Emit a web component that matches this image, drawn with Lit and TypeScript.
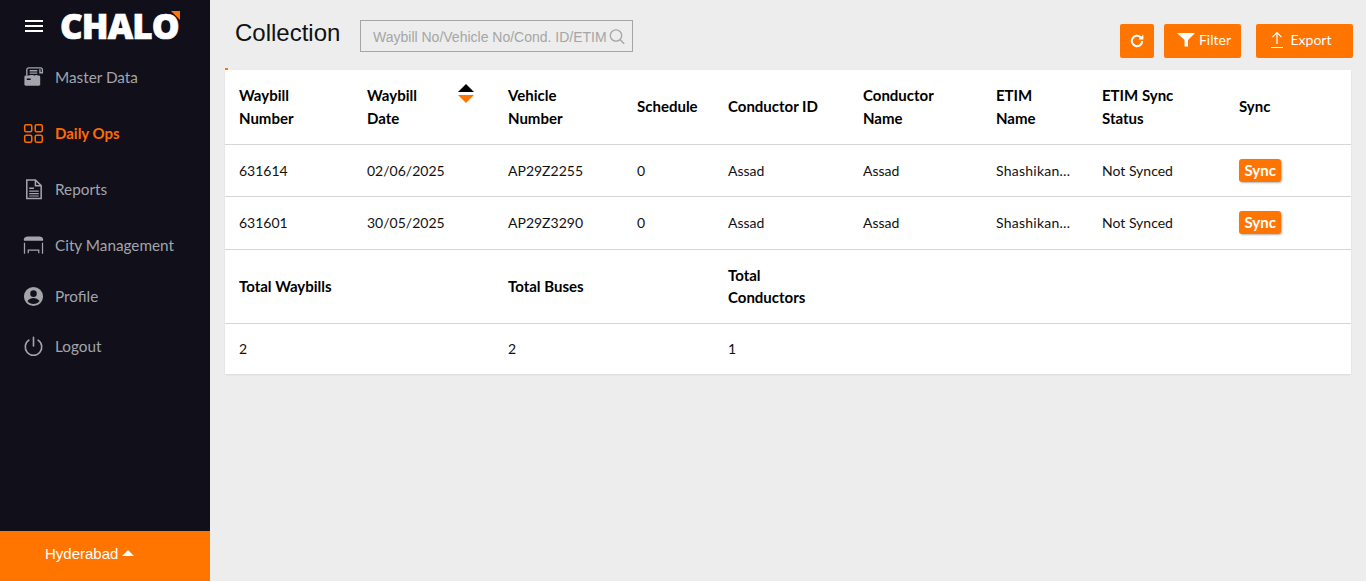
import { LitElement, html, css, svg } from 'lit';
import { customElement } from 'lit/decorators.js';

const navIcons: Record<string, unknown> = {
    master: svg`<path fill="none" stroke="currentColor" stroke-width="1.4" d="M5 10V3.5A2 2 0 0 1 7 2h12.5a1.8 1.8 0 0 1 1.8 1.8V7h-2.6V3.5M19.5 2H7M8 5h8M8 7.5h8M8 10h4M14 10h2"/><path fill="currentColor" d="M2.5 11.5a1.5 1.5 0 0 1 1.5-1.5h13.5a1.5 1.5 0 0 1 1.5 1.5V19a1.5 1.5 0 0 1-1.5 1.5H4A1.5 1.5 0 0 1 2.5 19z"/><path fill="#100f1a" d="M5 13h4v1.6H5z"/>`,
    daily: svg`<g fill="none" stroke="currentColor" stroke-width="1.6"><rect x="2.8" y="2.8" width="7.4" height="7.4" rx="1.6"/><rect x="13.8" y="2.8" width="7.4" height="7.4" rx="1.6"/><rect x="2.8" y="13.8" width="7.4" height="7.4" rx="1.6"/><rect x="13.8" y="13.8" width="7.4" height="7.4" rx="1.6"/></g>`,
    reports: svg`<path fill="none" stroke="currentColor" stroke-width="1.6" d="M5 2h9l6 6v13.4H5zM14 2v6h6"/><path fill="currentColor" d="M7.5 10h5v1.4h-5zM7.5 13h10v1.4h-10zM7.5 15.6h10V17h-10zM7.5 18.2h10v1.2h-10z"/>`,
    city: svg`<path fill="currentColor" d="M2 7V5.5C2 3.5 4 2.5 6 2.5h12c2 0 4 1 4 3V7z"/><path fill="none" stroke="currentColor" stroke-width="1.3" d="M2.6 9v11.5M21.4 9v11.5M6.5 20v-3.2h11V20"/>`,
    profile: svg`<path fill="currentColor" fill-rule="evenodd" d="M12 2a10 10 0 1 0 0 20 10 10 0 0 0 0-20zm0 3.6a3.4 3.4 0 1 1 0 6.8 3.4 3.4 0 0 1 0-6.8zM12 19.8c-2.6 0-4.9-1.2-6.3-3.2 1.4-1.9 4.2-3 6.3-3s4.9 1.1 6.3 3c-1.4 2-3.7 3.2-6.3 3.2z"/>`,
    logout: svg`<path fill="none" stroke="currentColor" stroke-width="1.7" stroke-linecap="round" d="M12 2.5v9M7.2 5.4a8.6 8.6 0 1 0 9.6 0"/>`,
};

const navItems = [
    { key: 'master', label: 'Master Data' },
    { key: 'daily', label: 'Daily Ops', active: true },
    { key: 'reports', label: 'Reports' },
    { key: 'city', label: 'City Management', city: true },
    { key: 'profile', label: 'Profile' },
    { key: 'logout', label: 'Logout' },
];

const rows = [
    ['631614', '02/06/2025', 'AP29Z2255', '0', 'Assad', 'Assad', 'Shashikant K', 'Not Synced'],
    ['631601', '30/05/2025', 'AP29Z3290', '0', 'Assad', 'Assad', 'Shashikant K', 'Not Synced'],
];

@customElement('app-root')
export class AppRoot extends LitElement {
    static styles = css`
        :host {
            display: block;
            width: 1366px;
            height: 581px;
            overflow: hidden;
            background: #ededed;
            font-family: 'Lato', 'Noto Sans', sans-serif;
            font-size: 14px;
            color: #111;
        }

        .page {
            display: flex;
            height: 100%;
        }

        .side {
            flex: 0 0 210px;
            display: flex;
            flex-direction: column;
            background: #100f1a;
        }

        .brand {
            height: 49px;
            display: flex;
            align-items: flex-start;
            gap: 17px;
            padding: 19px 0 0 25px;
            box-sizing: border-box;
        }

        .burger {
            display: flex;
            flex-direction: column;
            gap: 3px;
            width: 18px;
            padding-top: 1px;
        }

        .burger i {
            display: block;
            height: 2px;
            background: #fff;
        }

        .logo {
            position: relative;
            margin-top: -13px;
            font-family: 'Open Sans', sans-serif;
            font-weight: 800;
            font-size: 35px;
            line-height: 40px;
            letter-spacing: -0.9px;
            color: #fff;
            -webkit-text-stroke: 0.7px #fff;
        }

        .logo::after {
            content: '';
            position: absolute;
            right: -1px;
            top: 5px;
            border-top: 9px solid #ff7500;
            border-left: 9px solid transparent;
        }

        nav {
            flex: 1;
            display: grid;
            grid-template-rows: 56px 56px 56px 54px 50px 50px;
            align-content: start;
        }

        .item {
            display: flex;
            align-items: center;
            gap: 10px;
            padding-left: 22px;
            font-size: 15.3px;
            color: #a3a5ab;
        }

        .item.city {
            padding-top: 2px;
        }

        .item.active {
            color: #ff6a00;
            font-weight: 700;
            font-size: 15px;
        }

        .item svg {
            width: 23px;
            height: 23px;
            flex: none;
        }

        .city-pick {
            height: 50px;
            box-sizing: border-box;
            display: flex;
            align-items: center;
            gap: 4px;
            padding: 0 0 6px 45px;
            background: #ff7500;
            color: #fff;
            font-family: 'Liberation Sans', Arial, sans-serif;
            font-size: 15px;
        }

        .city-pick::after {
            content: '';
            border-left: 6px solid transparent;
            border-right: 6px solid transparent;
            border-bottom: 6px solid #fff;
        }

        main {
            flex: 1;
            min-width: 0;
            padding: 20px 15px 0;
        }

        .bar {
            height: 50px;
            display: flex;
            align-items: flex-start;
        }

        h1 {
            margin: 0 0 0 10px;
            width: 125px;
            font-family: 'Liberation Sans', Arial, sans-serif;
            font-size: 24px;
            font-weight: 400;
            line-height: 26px;
            color: #111;
        }

        .search {
            width: 273px;
            height: 32px;
            box-sizing: border-box;
            display: flex;
            align-items: center;
            padding: 2px 6px 0 12px;
            border: 1px solid #a5a5a5;
            font-family: 'Liberation Sans', Arial, sans-serif;
            font-size: 14px;
            color: #a5a5a5;
        }

        .search span {
            flex: 1;
            white-space: nowrap;
            overflow: hidden;
        }

        .search svg {
            width: 18px;
            height: 18px;
            flex: none;
        }

        .actions {
            margin-left: auto;
            display: flex;
            gap: 10px;
            padding-top: 4px;
            margin-right: -2px;
        }

        .btn {
            height: 34px;
            display: flex;
            align-items: center;
            justify-content: center;
            gap: 3px;
            box-sizing: border-box;
            padding-bottom: 3px;
            border-radius: 2px;
            background: #ff7500;
            color: #fff;
        }

        .btn svg {
            flex: none;
        }

        .btn.reload {
            width: 34px;
            padding-bottom: 0;
        }

        .btn.filter {
            width: 77px;
            padding-left: 3px;
            gap: 4px;
        }

        .btn.export {
            width: 97px;
            margin-left: 5px;
            gap: 7px;
            padding-right: 8px;
        }

        .panel {
            position: relative;
            background: #fff;
            box-shadow: 0 1px 2px rgba(0, 0, 0, 0.08);
        }

        .panel::before {
            content: '';
            position: absolute;
            left: 0;
            top: -2px;
            width: 3px;
            height: 2px;
            background: #ff7500;
        }

        .grid {
            display: grid;
            box-sizing: border-box;
            grid-template-columns: 128px 141px 129px 91px 135px 133px 106px 137px 126px;
            align-items: center;
            border-bottom: 1px solid #d6d6d6;
        }

        .grid:last-child {
            border-bottom: 0;
        }

        .grid > div {
            padding-left: 14px;
            min-width: 0;
        }

        .head {
            height: 75px;
            padding-bottom: 1px;
            font-size: 15px;
            font-weight: 700;
            line-height: 23px;
            color: #000;
        }

        .row {
            height: 52px;
        }

        .row + .row {
            height: 53px;
            padding-bottom: 2px;
        }

        .totals {
            height: 74px;
            padding-bottom: 2px;
            font-size: 15px;
            font-weight: 700;
            line-height: 22px;
            color: #000;
        }

        .sum {
            height: 50px;
            padding-bottom: 2px;
        }

        .sortable {
            position: relative;
        }

        .sort {
            position: absolute;
            left: 105px;
            top: 0;
            display: flex;
            flex-direction: column;
            gap: 3px;
        }

        .sort i {
            display: block;
            border-left: 8px solid transparent;
            border-right: 8px solid transparent;
        }

        .sort .up {
            border-bottom: 8px solid #000;
        }

        .sort .down {
            border-top: 8px solid #ff7500;
        }

        .grid > .clip {
            width: 77px;
            overflow: hidden;
            text-overflow: ellipsis;
            white-space: nowrap;
            padding-left: 0;
            margin-left: 14px;
            letter-spacing: 0.25px;
        }

        .sync {
            display: inline-block;
            padding: 0 5.5px;
            height: 23px;
            line-height: 23px;
            border-radius: 3px;
            background: #ff7500;
            color: #fff;
            font-size: 15px;
            font-weight: 700;
            box-shadow: 1px 1px 2px rgba(0, 0, 0, 0.3);
        }

        .span2 {
            grid-column: span 2;
        }

        .narrow {
            width: 90px;
        }
    `;

    override render() {
        return html`<div class="page">
            <aside class="side">
                <div class="brand">
                    <div class="burger"><i></i><i></i><i></i></div>
                    <div class="logo">CHALO</div>
                </div>
                <nav>
                    ${navItems.map(
                        (item) => html`<div class="item ${item.active ? 'active' : ''} ${item.city ? 'city' : ''}">
                            <svg viewBox="0 0 24 24">${navIcons[item.key]}</svg>
                            <span>${item.label}</span>
                        </div>`
                    )}
                </nav>
                <div class="city-pick">Hyderabad</div>
            </aside>
            <main>
                <div class="bar">
                    <h1>Collection</h1>
                    <div class="search">
                        <span>Waybill No/Vehicle No/Cond. ID/ETIM</span>
                        <svg viewBox="0 0 18 18" fill="none" stroke="#a5a5a5" stroke-width="1.3"><circle cx="8" cy="7.5" r="5.7"/><path d="M12.2 11.7l4 4"/></svg>
                    </div>
                    <div class="actions">
                        <div class="btn reload">
                            <svg width="16" height="16" viewBox="0 0 16 16" fill="none" stroke="#fff" stroke-width="2"><path d="M13.2 8a5.2 5.2 0 1 1-1.6-3.8"/><path fill="#fff" stroke="none" d="M14.4 1.6v5h-5z"/></svg>
                        </div>
                        <div class="btn filter">
                            <svg width="18" height="15" viewBox="0 0 18 15"><path fill="#fff" d="M0 1h18l-7 7v6.5H7.5V8z"/></svg>
                            <span>Filter</span>
                        </div>
                        <div class="btn export">
                            <svg width="14" height="18" viewBox="0 0 14 18" fill="none" stroke="#fff" stroke-width="1.2"><path d="M7 13V2M2.5 6.2L7 1.7l4.5 4.5M1 16.5h12"/></svg>
                            <span>Export</span>
                        </div>
                    </div>
                </div>
                <section class="panel">
                    <div class="grid head">
                        <div>Waybill<br />Number</div>
                        <div class="sortable">
                            Waybill<br />Date
                            <span class="sort"><i class="up"></i><i class="down"></i></span>
                        </div>
                        <div>Vehicle<br />Number</div>
                        <div>Schedule</div>
                        <div>Conductor ID</div>
                        <div>Conductor<br />Name</div>
                        <div>ETIM<br />Name</div>
                        <div>ETIM Sync<br />Status</div>
                        <div>Sync</div>
                    </div>
                    ${rows.map(
                        (r) => html`<div class="grid row">
                            ${r.map((v, i) => html`<div class=${i === 6 ? 'clip' : ''}>${v}</div>`)}
                            <div><span class="sync">Sync</span></div>
                        </div>`
                    )}
                    <div class="grid totals">
                        <div class="span2">Total Waybills</div>
                        <div class="span2">Total Buses</div>
                        <div><div class="narrow">Total Conductors</div></div>
                    </div>
                    <div class="grid sum">
                        <div class="span2">2</div>
                        <div class="span2">2</div>
                        <div>1</div>
                    </div>
                </section>
            </main>
        </div>`;
    }
}
